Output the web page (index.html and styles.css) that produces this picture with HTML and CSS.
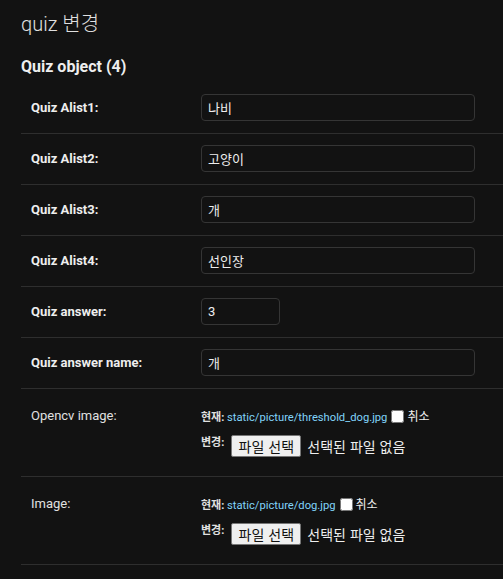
FILE: index.html
```html
<!DOCTYPE html>
<html lang="ko">
<head>
<meta charset="utf-8">
<title>quiz 변경</title>
<link rel="stylesheet" href="styles.css">
</head>
<body>
<div class="content">
  <h1 class="title">quiz 변경</h1>
  <h2 class="subtitle">Quiz object (4)</h2>
  <form class="form">
    <div class="row">
      <label class="label required">Quiz Alist1:</label>
      <input class="text-input" type="text" value="나비">
    </div>
    <div class="row">
      <label class="label required">Quiz Alist2:</label>
      <input class="text-input" type="text" value="고양이">
    </div>
    <div class="row">
      <label class="label required">Quiz Alist3:</label>
      <input class="text-input" type="text" value="개">
    </div>
    <div class="row">
      <label class="label required">Quiz Alist4:</label>
      <input class="text-input" type="text" value="선인장">
    </div>
    <div class="row">
      <label class="label required">Quiz answer:</label>
      <input class="text-input number-input" type="text" value="3">
    </div>
    <div class="row">
      <label class="label required">Quiz answer name:</label>
      <input class="text-input" type="text" value="개">
    </div>
    <div class="row row-file">
      <label class="label label-top">Opencv image:</label>
      <div class="file-widget">
        <p class="file-current"><span class="file-key">현재:</span> <a class="file-link" href="#">static/picture/threshold_dog.jpg</a><input class="file-clear" type="checkbox"><span class="file-clear-label">취소</span></p>
        <p class="file-change"><span class="file-key">변경:</span><span class="file-btn">파일 선택</span><span class="file-none">선택된 파일 없음</span></p>
      </div>
    </div>
    <div class="row row-file">
      <label class="label label-top">Image:</label>
      <div class="file-widget">
        <p class="file-current"><span class="file-key">현재:</span> <a class="file-link" href="#">static/picture/dog.jpg</a><input class="file-clear" type="checkbox"><span class="file-clear-label">취소</span></p>
        <p class="file-change"><span class="file-key">변경:</span><span class="file-btn">파일 선택</span><span class="file-none">선택된 파일 없음</span></p>
      </div>
    </div>
  </form>
</div>
</body>
</html>
```

FILE: styles.css
```css
* {
  box-sizing: border-box;
}

html, body {
  margin: 0;
  padding: 0;
  background: #121212;
}

body {
  font-family: Roboto, "Noto Sans CJK KR", "Noto Sans", sans-serif;
  color: #eeeeee;
  font-size: 13px;
}

.content {
  padding: 12px 0 0 21px;
}

.title {
  margin: 0;
  font-size: 20px;
  line-height: 24px;
  font-weight: 300;
  color: #e0e0e0;
}

.subtitle {
  margin: 21px 0 6px;
  font-size: 16px;
  line-height: 20px;
  font-weight: 700;
  color: #eeeeee;
}

.form {
  display: flex;
  flex-direction: column;
}

.row {
  display: flex;
  align-items: center;
  padding: 11px 10px 12px;
  border-bottom: 1px solid #2e2e2e;
}

.label {
  flex: 0 0 170px;
  font-size: 13px;
  line-height: 16px;
  color: #e0e0e0;
}

.label.required {
  font-weight: 700;
  color: #eeeeee;
}

.text-input {
  width: 274px;
  height: 27px;
  padding: 5px 6px;
  border: 1px solid #353535;
  border-radius: 4px;
  background: #121212;
  color: #eeeeee;
  font-family: Roboto, "Noto Sans CJK KR", sans-serif;
  font-size: 13px;
  outline: none;
}

.number-input {
  width: 79px;
}

.row-file {
  align-items: flex-start;
  padding-bottom: 19px;
}

.label-top {
  padding-top: 8px;
}

.file-widget {
  padding-top: 7px;
  font-size: 11px;
  color: #e0e0e0;
}

.file-current {
  margin: 0;
  line-height: 20px;
  height: 20px;
  white-space: nowrap;
}

.file-key {
  font-weight: 700;
  color: #e0e0e0;
}

.file-link {
  color: #81d4fa;
  text-decoration: none;
  font-size: 11.2px;
}

.file-clear {
  width: 13px;
  height: 13px;
  margin: 0 3px 0 4px;
  vertical-align: -2px;
}

.file-clear-label {
  color: #eeeeee;
  font-size: 12px;
}

.file-change {
  display: flex;
  align-items: flex-start;
  height: 22px;
  margin: 8px 0 0;
  white-space: nowrap;
}

.file-change .file-key {
  line-height: 15px;
}

.file-btn {
  width: 70px;
  height: 22px;
  margin-left: 7px;
  border: 1px solid #767676;
  border-radius: 2px;
  background: #efefef;
  color: #111111;
  font-size: 14px;
  line-height: 20px;
  text-align: center;
  font-family: "Noto Sans CJK KR", sans-serif;
}

.file-none {
  margin-left: 6px;
  font-size: 14px;
  line-height: 22px;
  color: #eeeeee;
  font-family: "Noto Sans CJK KR", sans-serif;
}
```
